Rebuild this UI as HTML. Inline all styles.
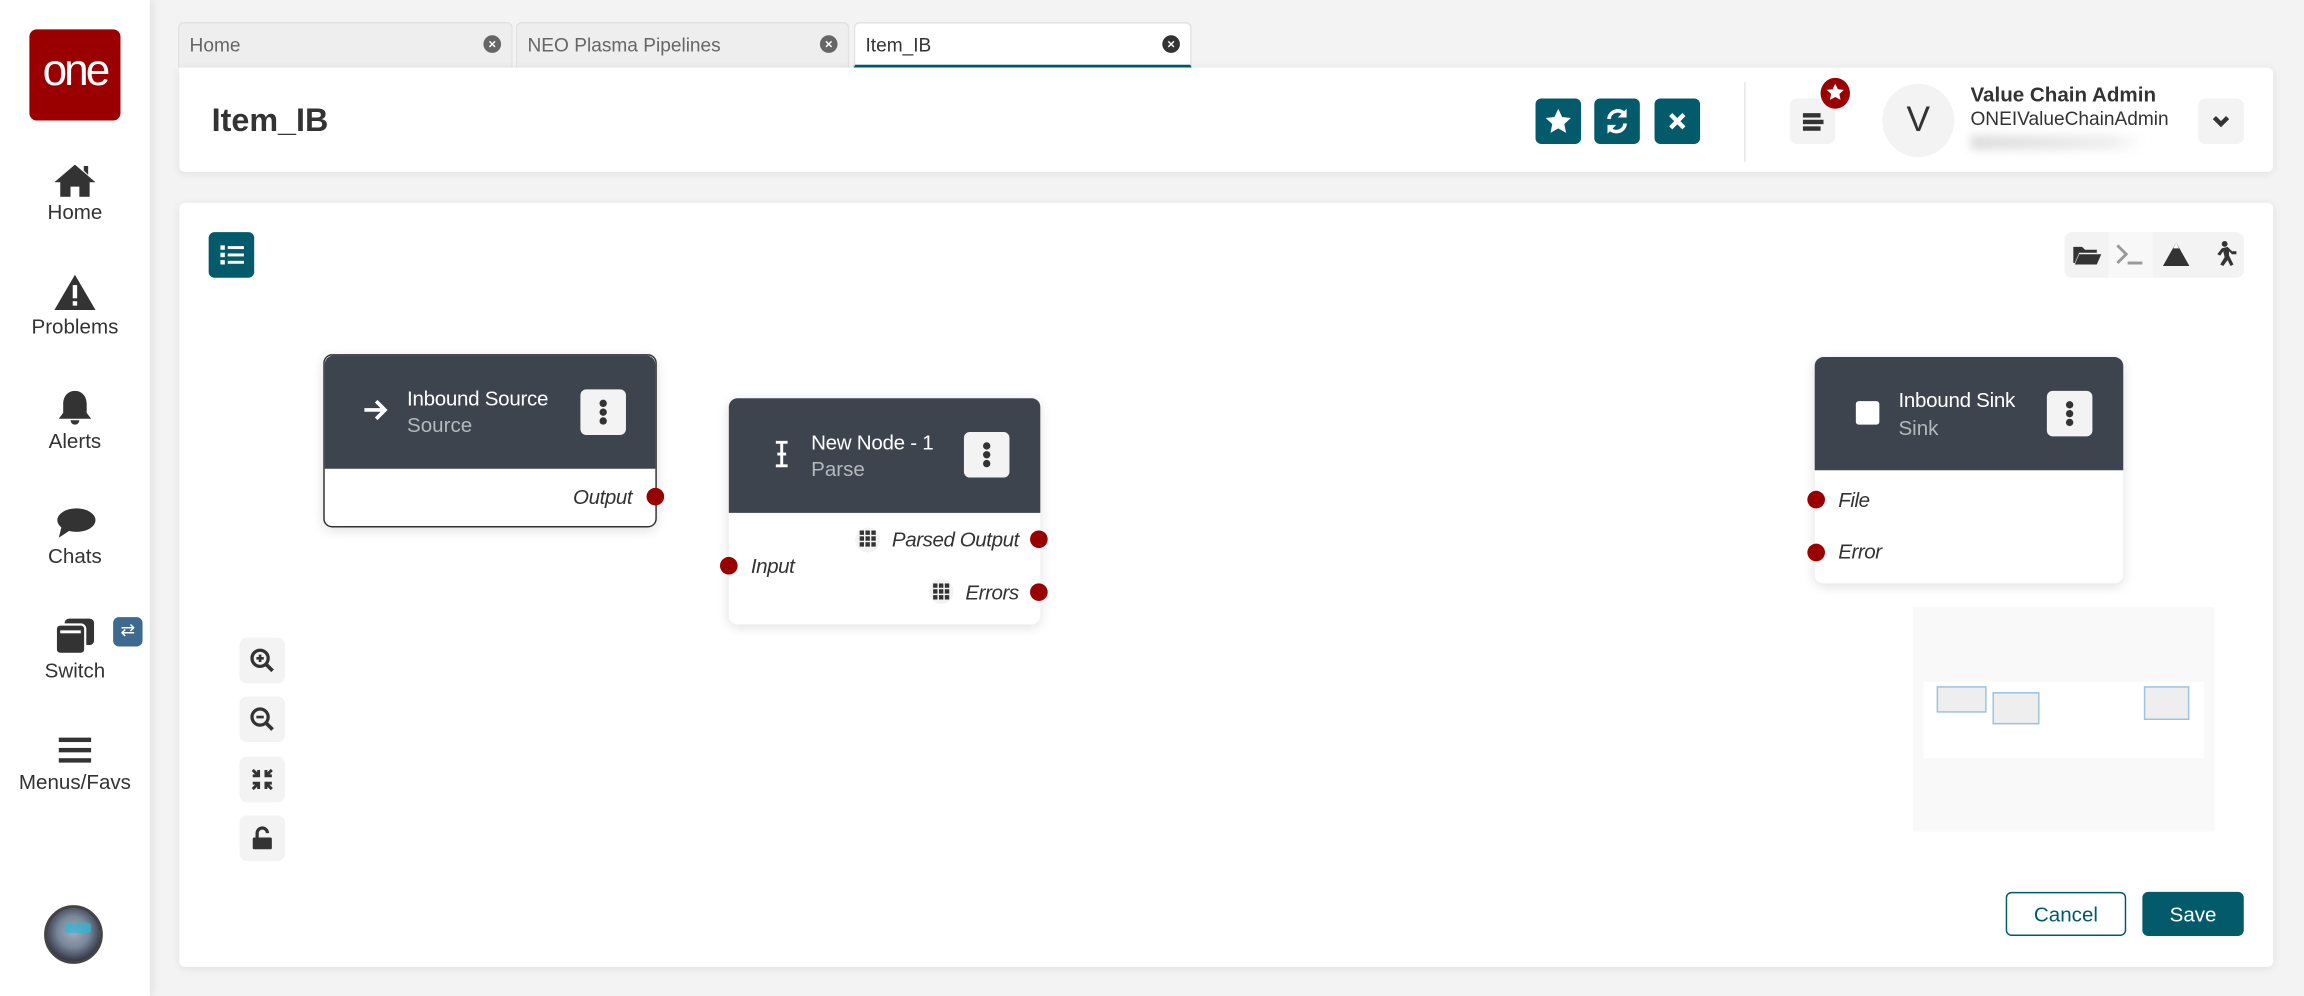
<!DOCTYPE html>
<html><head><meta charset="utf-8"><style>
*{box-sizing:border-box;margin:0;padding:0}
html,body{width:2304px;height:996px;overflow:hidden;background:#f3f3f3}
#w{position:absolute;left:0;top:0;width:1568px;height:678px;transform:scale(1.469388);transform-origin:0 0;font-family:"Liberation Sans",sans-serif;color:#333;background:#f3f3f3}
.a{position:absolute}
.side{left:0;top:0;width:102px;height:678px;background:#fff;box-shadow:2px 0 6px rgba(0,0,0,.08)}
.nav{position:absolute;left:0;width:102px;text-align:center;font-size:14px;color:#333}
.nav svg{display:block;margin:0 auto 2px}
.tab{position:absolute;top:15px;height:31px;background:#eee;border:1px solid #e2e2e2;border-bottom:none;border-radius:4px 4px 0 0;font-size:13px;color:#666;padding:7px 0 0 7px}
.tab .x{position:absolute;right:7px;top:8px;width:12px;height:12px;border-radius:50%;background:#666;color:#fff;font-size:9px;line-height:12px;text-align:center;font-weight:bold}
.card{background:#fff;border-radius:4px;box-shadow:0 1px 6px rgba(0,0,0,.08)}
.tb{position:absolute;width:31px;height:31px;border-radius:4px;background:#035a6b}
.gb{position:absolute;width:31px;height:31px;border-radius:5px;background:#f3f3f3}
.node{position:absolute;background:#fff;border-radius:6px;box-shadow:0 2px 8px rgba(0,0,0,.12)}
.nh{position:absolute;left:0;top:0;right:0;background:#3d444d;border-radius:6px 6px 0 0}
.nt{position:absolute;color:#fff;font-size:14px;letter-spacing:-.2px}
.ns{position:absolute;color:#b5b8bc;font-size:14px}
.kb{position:absolute;width:31px;height:31px;border-radius:4px;background:#f3f3f3}
.kb i{position:absolute;left:13px;width:5px;height:5px;border-radius:50%;background:#333}
.port{position:absolute;font-size:14px;font-style:italic;color:#333;letter-spacing:-.3px}
.dot{position:absolute;width:12px;height:12px;border-radius:50%;background:#990000}
.mm{position:absolute;background:#eee;border:1px solid #9cc3e0}
</style></head><body><div id="w">
<div class="a side"></div>
<div class="a" style="left:20px;top:20px;width:62px;height:62px;border-radius:5px;background:#9b0000;color:#fff;font-size:30px;text-align:center;line-height:58px;letter-spacing:-2px">one</div>
<div class="nav" style="top:110px"><svg width="30" height="24" viewBox="0 0 30 24"><path d="M15 2L1 14h4v10h7v-7h6v7h7V14h4L15 2z M21 3h3v6l-3-3z" fill="#333"/></svg>Home</div>
<div class="nav" style="top:186px"><svg width="30" height="26" viewBox="0 0 30 26"><path d="M15 1L1 25h28z" fill="#333"/><rect x="13.5" y="8" width="3" height="9" fill="#fff"/><rect x="13.5" y="19" width="3" height="3" fill="#fff"/></svg>Problems</div>
<div class="nav" style="top:264px"><svg width="26" height="26" viewBox="0 0 26 26"><path d="M13 2c-5 0-8 4-8 9v6l-3 4h22l-3-4v-6c0-5-3-9-8-9z M10 22a3 3 0 006 0z" fill="#333"/></svg>Alerts</div>
<div class="nav" style="top:344px"><svg width="28" height="24" viewBox="0 0 28 24"><ellipse cx="15" cy="10" rx="13" ry="8" fill="#333"/><path d="M5 14L3 22l9-6z" fill="#333"/></svg>Chats</div>
<div class="nav" style="top:420px"><svg width="30" height="26" viewBox="0 0 30 26"><rect x="8" y="1" width="20" height="18" rx="3" fill="#333"/><rect x="2" y="5" width="20" height="20" rx="3" fill="#333" stroke="#fff" stroke-width="1.5"/><rect x="5" y="9" width="14" height="2" fill="#fff"/></svg>Switch</div>
<div class="a" style="left:77px;top:420px;width:20px;height:20px;border-radius:4px;background:#3d6a8e;color:#fff;font-size:12px;text-align:center;line-height:19px">⇄</div>
<div class="nav" style="top:500px"><svg width="26" height="22" viewBox="0 0 26 22"><rect x="2" y="2" width="22" height="3" fill="#333"/><rect x="2" y="9" width="22" height="3" fill="#333"/><rect x="2" y="16" width="22" height="3" fill="#333"/></svg>Menus/Favs</div>
<div class="a" style="left:30px;top:616px;width:40px;height:40px;border-radius:50%;background:radial-gradient(circle at 50% 45%,#aab 0,#789 40%,#334 75%);border:2px solid #444"></div>
<div class="a" style="left:44px;top:628px;width:18px;height:7px;background:#2cb6d6;border-radius:2px;opacity:.7"></div>

<div class="tab" style="left:121px;width:228px">Home<span class="x">×</span></div>
<div class="tab" style="left:351px;width:227px">NEO Plasma Pipelines<span class="x">×</span></div>
<div class="tab" style="left:581px;width:230px;background:#fff;color:#333;border-bottom:2px solid #005a6e;height:31px">Item_IB<span class="x" style="background:#333">×</span></div>

<div class="a card" style="left:122px;top:46px;width:1425px;height:71px;border-radius:0 4px 4px 4px"></div>
<div class="a" style="left:144px;top:69px;font-size:22px;font-weight:bold;color:#333">Item_IB</div>
<div class="tb" style="left:1045px;top:67px"><svg width="31" height="31" viewBox="0 0 31 31"><path d="M15.5 7l2.6 5.6 6 .7-4.5 4.1 1.2 6-5.3-3-5.3 3 1.2-6-4.5-4.1 6-.7z" fill="#fff"/></svg></div>
<div class="tb" style="left:1085px;top:67px"><svg width="31" height="31" viewBox="0 0 31 31"><path d="M10 14a6 6 0 0110.5-3.5M21 17a6 6 0 01-10.5 3.5" stroke="#fff" stroke-width="2.5" fill="none"/><path d="M22 7v6h-6z M9 24v-6h6z" fill="#fff"/></svg></div>
<div class="tb" style="left:1126px;top:67px"><svg width="31" height="31" viewBox="0 0 31 31"><path d="M11 11l9 9M20 11l-9 9" stroke="#fff" stroke-width="3"/></svg></div>
<div class="a" style="left:1187px;top:56px;width:1px;height:54px;background:#e5e5e5"></div>
<div class="gb" style="left:1218px;top:67px"><svg width="31" height="31" viewBox="0 0 31 31"><rect x="9" y="10" width="12" height="3" fill="#333"/><rect x="9" y="14.5" width="14" height="3" fill="#333"/><rect x="9" y="19" width="12" height="3" fill="#333"/></svg></div>
<div class="a" style="left:1239px;top:53px;width:20px;height:21px;border-radius:50%;background:#9b0000"><svg width="20" height="21" viewBox="0 0 20 21"><path d="M10 4l1.8 3.7 4 .5-3 2.8.8 4-3.6-2-3.6 2 .8-4-3-2.8 4-.5z" fill="#fff"/></svg></div>
<div class="a" style="left:1281px;top:57px;width:49px;height:50px;border-radius:50%;background:#f3f3f3;font-size:24px;text-align:center;line-height:50px;color:#333">V</div>
<div class="a" style="left:1341px;top:56px;font-size:14px;font-weight:bold">Value Chain Admin</div>
<div class="a" style="left:1341px;top:73px;font-size:13px">ONEIValueChainAdmin</div>
<div class="a" style="left:1341px;top:92px;width:118px;height:10px;background:linear-gradient(90deg,#ddd,#eee 80%,#fff);filter:blur(3px)"></div>
<div class="gb" style="left:1496px;top:67px"><svg width="31" height="31" viewBox="0 0 31 31"><path d="M11 13l4.5 4.5L20 13" stroke="#333" stroke-width="3" fill="none"/></svg></div>

<div class="a card" style="left:122px;top:138px;width:1425px;height:520px"></div>
<div class="tb" style="left:142px;top:158px"><svg width="31" height="31" viewBox="0 0 31 31"><g fill="#fff"><rect x="8" y="9" width="3" height="3"/><rect x="8" y="14" width="3" height="3"/><rect x="8" y="19" width="3" height="3"/><rect x="13" y="9.5" width="11" height="2"/><rect x="13" y="14.5" width="11" height="2"/><rect x="13" y="19.5" width="11" height="2"/></g></svg></div>
<div class="a" style="left:1405px;top:158px;width:122px;height:31px;border-radius:5px;background:#f3f3f3"></div>
<div class="a" style="left:1435px;top:158px;width:30px;height:31px;background:#f8f8f8"></div>
<svg class="a" style="left:1405px;top:158px" width="122" height="31" viewBox="0 0 122 31"><path d="M6 10h6l2 2h8v2H10l-3 7H6z M10 15h15l-3 7H7z" fill="#333"/><path d="M36 9l6 6-6 6" stroke="#999" stroke-width="2" fill="none"/><rect x="43" y="20" width="10" height="2" fill="#999"/><path d="M76 7L67 23h18z" fill="#333"/><path d="M76 7l-2 4h4z" fill="#fff"/><circle cx="109" cy="8" r="2" fill="#333"/><path d="M107 11l-3 4 2 1 2-3 1 4-3 5 2 1 3-4 2 4 2-1-3-6 0-3 2 2 3 0 0-2-3 0-3-3z" fill="#333"/></svg>

<!-- source node -->
<div class="node" style="left:220px;top:241px;width:227px;height:118px;border:1px solid #333"><div class="nh" style="height:77px"></div></div>
<svg class="a" style="left:246px;top:270px" width="20" height="18" viewBox="0 0 20 18"><path d="M2 9h14M10 3l6 6-6 6" stroke="#fff" stroke-width="2.5" fill="none"/></svg>
<div class="nt" style="left:277px;top:263px">Inbound Source</div>
<div class="ns" style="left:277px;top:281px">Source</div>
<div class="kb" style="left:395px;top:265px"><i style="top:7px"></i><i style="top:13px"></i><i style="top:19px"></i></div>
<div class="port" style="left:390px;top:330px">Output</div>
<div class="dot" style="left:440px;top:332px"></div>

<!-- parse node -->
<div class="node" style="left:496px;top:271px;width:212px;height:154px"><div class="nh" style="height:78px"></div></div>
<svg class="a" style="left:526px;top:299px" width="12" height="20" viewBox="0 0 12 20"><path d="M2 2h8M6 2v16M2 18h8M3 10h6" stroke="#fff" stroke-width="2" fill="none"/></svg>
<div class="nt" style="left:552px;top:293px">New Node - 1</div>
<div class="ns" style="left:552px;top:311px">Parse</div>
<div class="kb" style="left:656px;top:294px"><i style="top:7px"></i><i style="top:13px"></i><i style="top:19px"></i></div>
<div class="a" style="left:582px;top:359px;width:17px;height:17px;border-radius:50%;background:#f3f3f3"></div>
<svg class="a" style="left:585px;top:361px" width="12" height="12" viewBox="0 0 12 12"><g fill="#333"><rect x="0" y="0" width="3" height="3"/><rect x="4" y="0" width="3" height="3"/><rect x="8" y="0" width="3" height="3"/><rect x="0" y="4" width="3" height="3"/><rect x="4" y="4" width="3" height="3"/><rect x="8" y="4" width="3" height="3"/><rect x="0" y="8" width="3" height="3"/><rect x="4" y="8" width="3" height="3"/><rect x="8" y="8" width="3" height="3"/></g></svg>
<div class="port" style="left:607px;top:359px">Parsed Output</div>
<div class="dot" style="left:701px;top:361px"></div>
<div class="dot" style="left:490px;top:379px"></div>
<div class="port" style="left:511px;top:377px">Input</div>
<div class="a" style="left:632px;top:394px;width:17px;height:17px;border-radius:50%;background:#f3f3f3"></div>
<svg class="a" style="left:635px;top:397px" width="12" height="12" viewBox="0 0 12 12"><g fill="#333"><rect x="0" y="0" width="3" height="3"/><rect x="4" y="0" width="3" height="3"/><rect x="8" y="0" width="3" height="3"/><rect x="0" y="4" width="3" height="3"/><rect x="4" y="4" width="3" height="3"/><rect x="8" y="4" width="3" height="3"/><rect x="0" y="8" width="3" height="3"/><rect x="4" y="8" width="3" height="3"/><rect x="8" y="8" width="3" height="3"/></g></svg>
<div class="port" style="left:657px;top:395px">Errors</div>
<div class="dot" style="left:701px;top:397px"></div>

<!-- sink node -->
<div class="node" style="left:1235px;top:243px;width:210px;height:154px"><div class="nh" style="height:77px"></div></div>
<div class="a" style="left:1263px;top:273px;width:16px;height:16px;border-radius:2px;background:#fff"></div>
<div class="nt" style="left:1292px;top:264px">Inbound Sink</div>
<div class="ns" style="left:1292px;top:283px">Sink</div>
<div class="kb" style="left:1393px;top:266px"><i style="top:7px"></i><i style="top:13px"></i><i style="top:19px"></i></div>
<div class="dot" style="left:1230px;top:334px"></div>
<div class="port" style="left:1251px;top:332px">File</div>
<div class="dot" style="left:1230px;top:370px"></div>
<div class="port" style="left:1251px;top:367px">Error</div>

<!-- minimap -->
<div class="a" style="left:1302px;top:413px;width:205px;height:153px;background:#f9f9f9"></div>
<div class="a" style="left:1309px;top:464px;width:191px;height:52px;background:#fff"></div>
<div class="mm" style="left:1318px;top:467px;width:34px;height:18px"></div>
<div class="mm" style="left:1356px;top:471px;width:32px;height:22px"></div>
<div class="mm" style="left:1459px;top:467px;width:31px;height:23px"></div>

<!-- zoom controls -->
<div class="gb" style="left:163px;top:434px"><svg width="31" height="31" viewBox="0 0 31 31"><circle cx="14" cy="14" r="5.5" stroke="#333" stroke-width="2.2" fill="none"/><path d="M18 18l4.5 4.5" stroke="#333" stroke-width="2.5"/><path d="M11.5 14h5M14 11.5v5" stroke="#333" stroke-width="1.8"/></svg></div>
<div class="gb" style="left:163px;top:474px"><svg width="31" height="31" viewBox="0 0 31 31"><circle cx="14" cy="14" r="5.5" stroke="#333" stroke-width="2.2" fill="none"/><path d="M18 18l4.5 4.5" stroke="#333" stroke-width="2.5"/><path d="M11.5 14h5" stroke="#333" stroke-width="1.8"/></svg></div>
<div class="gb" style="left:163px;top:515px"><svg width="31" height="31" viewBox="0 0 31 31"><path d="M9 9l4 4M13 9v4h-4M22 9l-4 4M18 9v4h4M9 22l4-4M13 22v-4h-4M22 22l-4-4M18 22v-4h4" stroke="#333" stroke-width="2" fill="none"/></svg></div>
<div class="gb" style="left:163px;top:555px"><svg width="31" height="31" viewBox="0 0 31 31"><path d="M12 15v-3a3.5 3.5 0 017 0" stroke="#333" stroke-width="2.2" fill="none"/><rect x="9" y="15" width="13" height="8" rx="1" fill="#333"/></svg></div>

<div class="a" style="left:1365px;top:607px;width:82px;height:30px;border:1px solid #005a6b;border-radius:4px;color:#005a6b;font-size:14px;text-align:center;line-height:28px">Cancel</div>
<div class="a" style="left:1458px;top:607px;width:69px;height:30px;background:#035a6b;border-radius:4px;color:#fff;font-size:14px;text-align:center;line-height:30px">Save</div>
</div></body></html>
